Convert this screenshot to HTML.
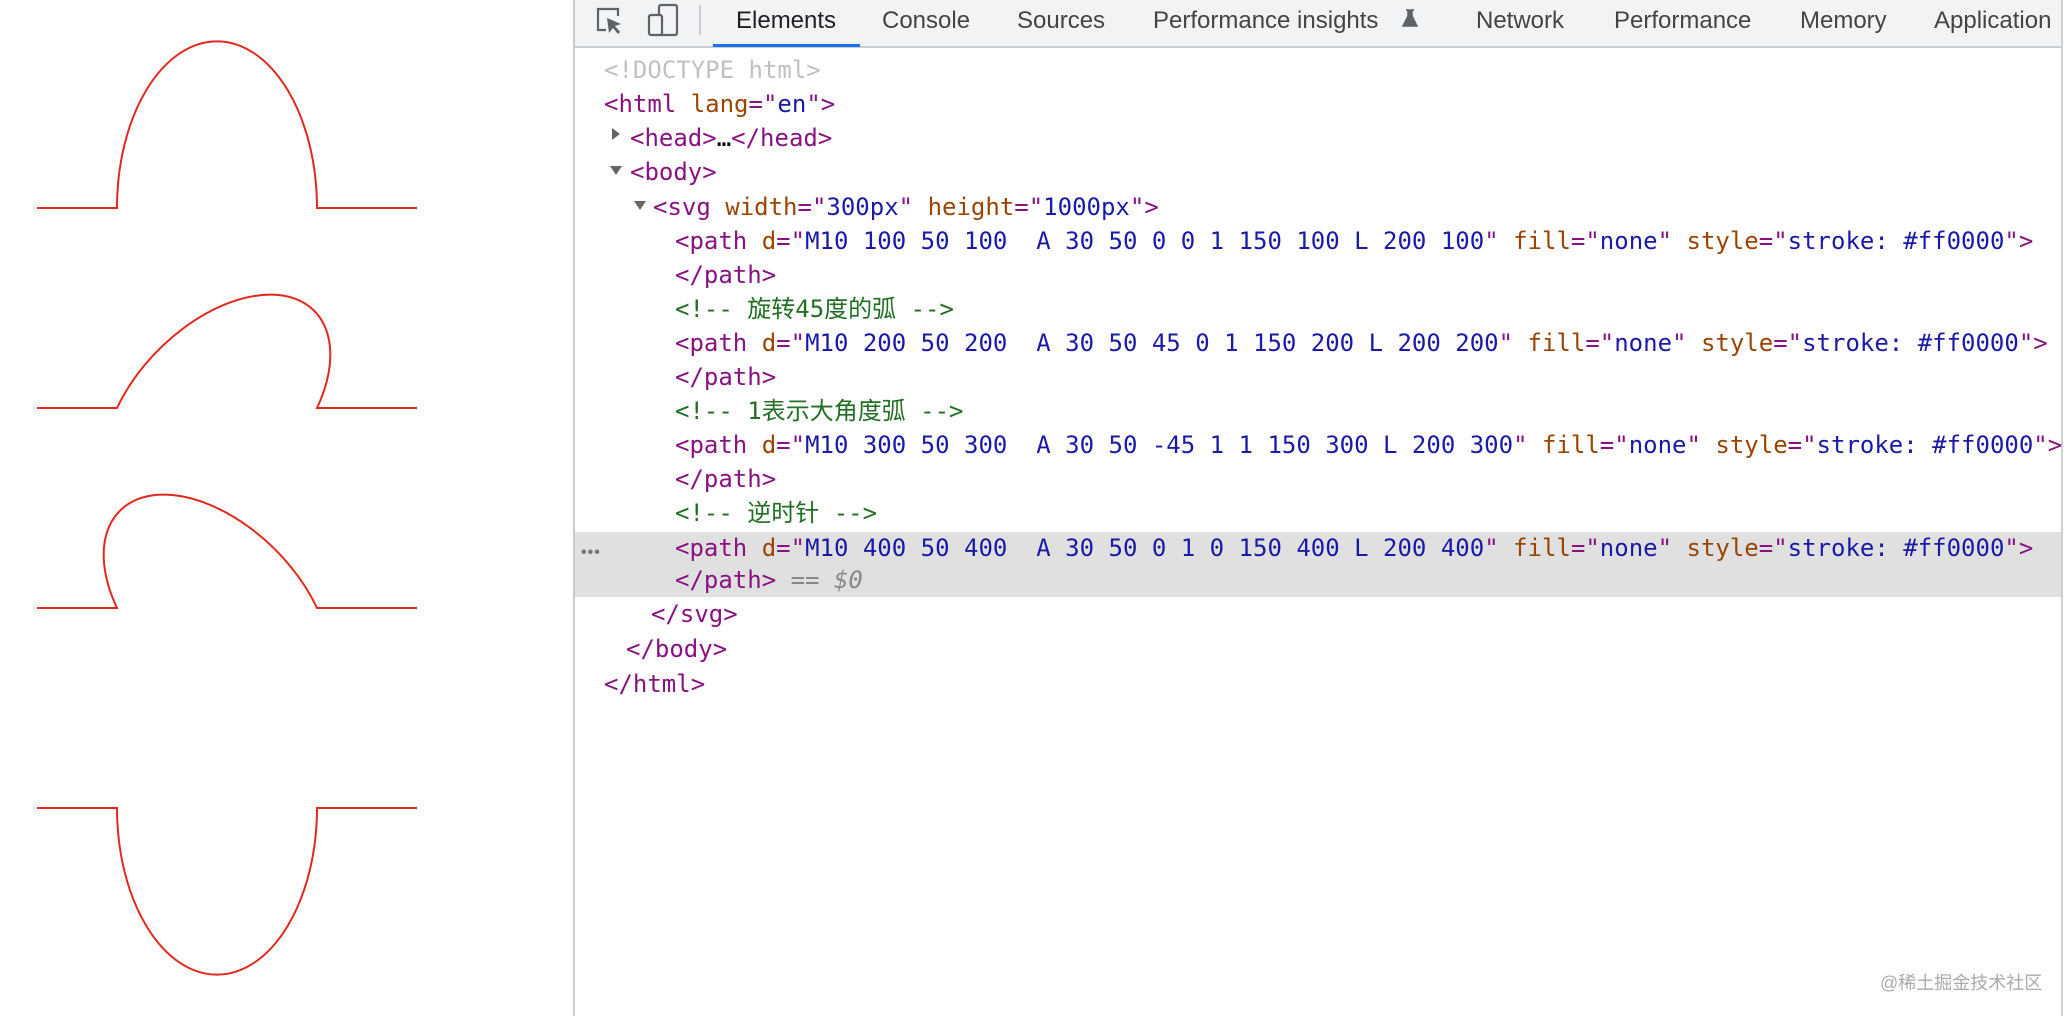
<!DOCTYPE html>
<html><head><meta charset="utf-8"><style>
html,body{margin:0;padding:0;width:2066px;height:1016px;overflow:hidden;background:#fff;position:relative}
.dt{position:absolute;left:573px;top:0;width:1490px;height:1016px;border-left:2px solid #cbcbcb;border-right:2px solid #d0d0d0;box-sizing:border-box}
.tb{position:absolute;left:0;top:0;right:0;height:46px;background:#f1f3f4;border-bottom:2px solid #cacdd1}
.tab{position:absolute;top:7px;font:24px "Liberation Sans",sans-serif;color:#444;white-space:nowrap}
.code{position:absolute;left:0;right:0;top:0;font:24px "DejaVu Sans Mono","Liberation Mono",monospace;white-space:pre}
.ln{position:absolute;height:34px;line-height:34px}
.t{color:#881280}.a{color:#994500}.v{color:#1a1aa6}.c{color:#236e25;font-family:"DejaVu Sans Mono","Noto Sans CJK SC",monospace}.d{color:#c0c0c0}
.tri{position:absolute;width:0;height:0}
</style></head><body>
<svg style="position:absolute;left:17px;top:8px" width="420" height="1000" viewBox="0 0 210 500">
<path d="M10 100 50 100  A 30 50 0 0 1 150 100 L 200 100" fill="none" stroke="#e0291f" stroke-width="1"/>
<path d="M10 200 50 200  A 30 50 45 0 1 150 200 L 200 200" fill="none" stroke="#e0291f" stroke-width="1"/>
<path d="M10 300 50 300  A 30 50 -45 1 1 150 300 L 200 300" fill="none" stroke="#e0291f" stroke-width="1"/>
<path d="M10 400 50 400  A 30 50 0 1 0 150 400 L 200 400" fill="none" stroke="#e0291f" stroke-width="1"/>
</svg>
<div class="dt">
<div class="tb">
<svg style="position:absolute;left:0;top:0" width="140" height="46">
<path d="M31 30 H23 V9 H43 V16" fill="none" stroke="#5f6368" stroke-width="2.2"/>
<path d="M32 18 L46 24 L40 26 L45 32 L43 34 L38 28 L34 33 Z" fill="#5f6368"/>
<rect x="84" y="5" width="18" height="30" rx="2" fill="none" stroke="#5f6368" stroke-width="2.2"/>
<rect x="74" y="15" width="13" height="20" rx="2" fill="#f1f3f4" stroke="#5f6368" stroke-width="2.2"/>
<line x1="125" y1="5" x2="125" y2="35" stroke="#cbcdd1" stroke-width="2"/>
</svg>
<div class="tab" style="left:161px;color:#202124">Elements</div>
<div style="position:absolute;left:138px;top:44px;width:147px;height:3px;background:#1a73e8"></div>
<div class="tab" style="left:307px">Console</div>
<div class="tab" style="left:442px">Sources</div>
<div class="tab" style="left:578px">Performance insights</div>
<svg style="position:absolute;left:826px;top:9px" width="18" height="20"><path d="M5 1h8M7 1v6L2 17h14L11 7V1" fill="#5f6368" stroke="#5f6368" stroke-width="1.5"/></svg>
<div class="tab" style="left:901px">Network</div>
<div class="tab" style="left:1039px">Performance</div>
<div class="tab" style="left:1225px">Memory</div>
<div class="tab" style="left:1359px">Application</div>
</div>
<div style="position:absolute;left:0;right:0;top:532px;height:65px;background:#e0e0e0"></div>
<div style="position:absolute;left:6px;top:544px;font:bold 16px 'Liberation Sans',sans-serif;color:#777;letter-spacing:1px">•••</div>
<div class="code">
<div class="ln" style="left:29px;top:53px"><span class="d">&lt;!DOCTYPE html&gt;</span></div>
<div class="ln" style="left:29px;top:87px"><span class="t">&lt;html </span><span class="a">lang</span><span class="t">="</span><span class="v">en</span><span class="t">"&gt;</span></div>
<div class="tri" style="left:37px;top:128px;border-left:8px solid #666;border-top:6px solid transparent;border-bottom:6px solid transparent"></div>
<div class="ln" style="left:55px;top:121px"><span class="t">&lt;head&gt;</span>…<span class="t">&lt;/head&gt;</span></div>
<div class="tri" style="left:35px;top:166px;border-top:9px solid #666;border-left:6px solid transparent;border-right:6px solid transparent"></div>
<div class="ln" style="left:55px;top:155px"><span class="t">&lt;body&gt;</span></div>
<div class="tri" style="left:59px;top:201px;border-top:9px solid #666;border-left:6px solid transparent;border-right:6px solid transparent"></div>
<div class="ln" style="left:78px;top:190px"><span class="t">&lt;svg </span><span class="a">width</span><span class="t">="</span><span class="v">300px</span><span class="t">" </span><span class="a">height</span><span class="t">="</span><span class="v">1000px</span><span class="t">"&gt;</span></div>
<div class="ln" style="left:100px;top:224px"><span class="t">&lt;path </span><span class="a">d</span><span class="t">="</span><span class="v">M10 100 50 100  A 30 50 0 0 1 150 100 L 200 100</span><span class="t">" </span><span class="a">fill</span><span class="t">="</span><span class="v">none</span><span class="t">" </span><span class="a">style</span><span class="t">="</span><span class="v">stroke: #ff0000</span><span class="t">"&gt;</span></div>
<div class="ln" style="left:100px;top:258px"><span class="t">&lt;/path&gt;</span></div>
<div class="ln" style="left:100px;top:292px"><span class="c">&lt;!-- 旋转45度的弧 --&gt;</span></div>
<div class="ln" style="left:100px;top:326px"><span class="t">&lt;path </span><span class="a">d</span><span class="t">="</span><span class="v">M10 200 50 200  A 30 50 45 0 1 150 200 L 200 200</span><span class="t">" </span><span class="a">fill</span><span class="t">="</span><span class="v">none</span><span class="t">" </span><span class="a">style</span><span class="t">="</span><span class="v">stroke: #ff0000</span><span class="t">"&gt;</span></div>
<div class="ln" style="left:100px;top:360px"><span class="t">&lt;/path&gt;</span></div>
<div class="ln" style="left:100px;top:394px"><span class="c">&lt;!-- 1表示大角度弧 --&gt;</span></div>
<div class="ln" style="left:100px;top:428px"><span class="t">&lt;path </span><span class="a">d</span><span class="t">="</span><span class="v">M10 300 50 300  A 30 50 -45 1 1 150 300 L 200 300</span><span class="t">" </span><span class="a">fill</span><span class="t">="</span><span class="v">none</span><span class="t">" </span><span class="a">style</span><span class="t">="</span><span class="v">stroke: #ff0000</span><span class="t">"&gt;</span></div>
<div class="ln" style="left:100px;top:462px"><span class="t">&lt;/path&gt;</span></div>
<div class="ln" style="left:100px;top:496px"><span class="c">&lt;!-- 逆时针 --&gt;</span></div>
<div class="ln" style="left:100px;top:531px"><span class="t">&lt;path </span><span class="a">d</span><span class="t">="</span><span class="v">M10 400 50 400  A 30 50 0 1 0 150 400 L 200 400</span><span class="t">" </span><span class="a">fill</span><span class="t">="</span><span class="v">none</span><span class="t">" </span><span class="a">style</span><span class="t">="</span><span class="v">stroke: #ff0000</span><span class="t">"&gt;</span></div>
<div class="ln" style="left:100px;top:563px"><span class="t">&lt;/path&gt;</span><span style="color:#888"> == <i>$0</i></span></div>
<div class="ln" style="left:76px;top:597px"><span class="t">&lt;/svg&gt;</span></div>
<div class="ln" style="left:51px;top:632px"><span class="t">&lt;/body&gt;</span></div>
<div class="ln" style="left:29px;top:667px"><span class="t">&lt;/html&gt;</span></div>
</div>
</div>
<div style="position:absolute;left:1880px;top:969px;font:18px 'Liberation Sans','Noto Sans CJK SC',sans-serif;color:#aaa">@稀土掘金技术社区</div>
</body></html>
